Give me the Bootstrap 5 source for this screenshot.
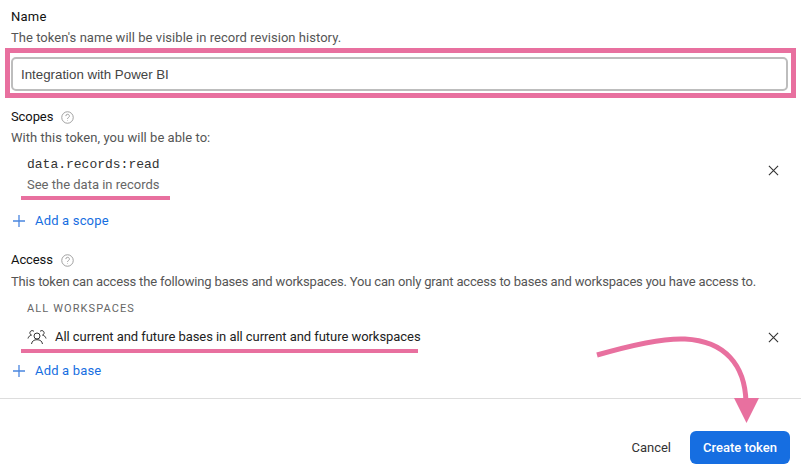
<!DOCTYPE html>
<html lang="en"><head><meta charset="utf-8"><title>Create token</title>
<link href="https://cdn.jsdelivr.net/npm/bootstrap@5.3.0/dist/css/bootstrap.min.css" rel="stylesheet">
<style>
html,body{height:468px;overflow:hidden;background:#fff}
body{font-family:Roboto,"Open Sans",sans-serif;font-size:13px;line-height:18px;color:#333;position:relative}
.pane{padding:0 11px;height:399px;border-bottom:1px solid #ddd}
.lbl{color:#111;font-size:13px;font-weight:400;letter-spacing:.25px}
.lbl-tight{letter-spacing:-.1px}
.lbl-top{padding-top:8px}
.hint{color:#555;margin-top:3px;letter-spacing:.04px}
.hint-long{letter-spacing:-.17px;margin-top:4px}
.pink-box{border:5px solid #e8709f;margin:1px -6px 0 -6px;padding:4px 3px 2px 1px}
.tok-input{height:34px;border:2px solid #bdbdbd;border-radius:5px;padding:0 8px;font-family:"Liberation Sans",sans-serif;font-size:13.3px;color:#444;background:#fff;width:100%;box-shadow:none}
.ico-help{width:13px;height:13px;margin-left:8px}
.scope-code{font-family:"Liberation Mono",monospace;font-size:13px;color:#333;margin:9px 0 0 16px;line-height:18px}
.scope-desc{color:#666;margin-left:16px;margin-top:2px}
.pink-line{height:4px;background:#e8709f}
.pl-a{width:149px;margin:2px 0 0 10px}
.pl-b{width:397px;margin:3px 0 0 10px}
.add-link{color:#166ee1;font-weight:400;letter-spacing:.18px;text-decoration:none;display:flex;align-items:center;gap:10px;padding-left:2px}
.ico-x{width:11px;height:11px;margin-right:11px}
.workspaces{font-size:11px;letter-spacing:1.1px;color:#666;font-weight:400;margin:9px 0 0 16px}
.foot{padding:32px 11px 0 0;gap:13px}
.btn-cancel{font-size:13px;color:#333;padding:0 6px;background:none;border:0}
.btn-make{background:#166ee1;border:0;color:#fff;font-size:13px;font-weight:500;height:33px;width:100px;border-radius:6px;padding:0}
.arrow{position:absolute;left:590px;top:335px;width:180px;height:90px;pointer-events:none}
.m-scopes{margin-top:10px}.m-add1{margin-top:12px}.m-access{margin-top:21px}.m-row{margin-top:10px}.m-add2{margin-top:9px}
.row-ws{margin-left:16px;gap:8px;color:#222;letter-spacing:-.05px}
</style></head>
<body>
<div class="pane">
  <div class="lbl lbl-top">Name</div>
  <div class="hint">The token's name will be visible in record revision history.</div>
  <div class="pink-box"><input class="tok-input form-control" type="text" value="Integration with Power BI" aria-label="Name"></div>

  <div class="lbl lbl-tight m-scopes d-flex align-items-center">Scopes
    <svg class="ico-help" viewBox="0 0 14 14" fill="none" stroke="#999"><circle cx="7" cy="7" r="6.2"/><path d="M5.2 5.5a1.9 1.9 0 1 1 2.8 1.6c-.7.4-1 .7-1 1.5" stroke-width="1"/><circle cx="7" cy="10.4" r=".5" fill="#999" stroke="none"/></svg>
  </div>
  <div class="hint">With this token, you will be able to:</div>
  <div class="d-flex justify-content-between align-items-center">
    <div>
      <div class="scope-code">data.records:read</div>
      <div class="scope-desc">See the data in records</div>
    </div>
    <svg class="ico-x" viewBox="0 0 12 12" stroke="#333" stroke-width="1.2"><path d="M1 1l10 10M11 1L1 11"/></svg>
  </div>
  <div class="pink-line pl-a"></div>
  <a class="add-link m-add1" href="#">
    <svg width="12" height="12" viewBox="0 0 12 12" stroke="#4a86e0" stroke-width="1.3"><path d="M6 0v12M0 6h12"/></svg>Add a scope</a>

  <div class="lbl lbl-tight m-access d-flex align-items-center">Access
    <svg class="ico-help" viewBox="0 0 14 14" fill="none" stroke="#999"><circle cx="7" cy="7" r="6.2"/><path d="M5.2 5.5a1.9 1.9 0 1 1 2.8 1.6c-.7.4-1 .7-1 1.5" stroke-width="1"/><circle cx="7" cy="10.4" r=".5" fill="#999" stroke="none"/></svg>
  </div>
  <div class="hint hint-long">This token can access the following bases and workspaces. You can only grant access to bases and workspaces you have access to.</div>
  <div class="workspaces">ALL WORKSPACES</div>
  <div class="m-row d-flex justify-content-between align-items-center">
    <div class="row-ws d-flex align-items-center">
      <svg width="20" height="16" viewBox="0 0 20 16" fill="none" stroke="#333" stroke-width="1"><circle cx="10" cy="7" r="3"/><path d="M4.5 15c.5-3 2.500-4.300 5.500-4.300s5 1.300 5.500 4.300"/><path d="M7 2.500a2.300 2.300 0 1 0-2.500 3.600C2.800 6.500 1.500 7.500 1 9.500"/><path d="M13 2.500a2.300 2.300 0 1 1 2.500 3.600c1.700.4 3 1.400 3.500 3.400"/></svg>
      <span>All current and future bases in all current and future workspaces</span>
    </div>
    <svg class="ico-x" viewBox="0 0 12 12" stroke="#333" stroke-width="1.2"><path d="M1 1l10 10M11 1L1 11"/></svg>
  </div>
  <div class="pink-line pl-b"></div>
  <a class="add-link m-add2" href="#">
    <svg width="12" height="12" viewBox="0 0 12 12" stroke="#4a86e0" stroke-width="1.3"><path d="M6 0v12M0 6h12"/></svg>Add a base</a>
</div>
<div class="foot d-flex justify-content-end align-items-center">
  <button class="btn btn-cancel" type="button">Cancel</button>
  <button class="btn btn-make" type="button">Create token</button>
</div>
<svg class="arrow" viewBox="590 335 180 90" fill="none">
  <path d="M597 355C635 344 665 338 685 339C725 341 745 365 746 402" stroke="#e8709f" stroke-width="5"/>
  <path d="M734 398H759L746.500 423Z" fill="#e8709f"/>
</svg>
</body></html>
